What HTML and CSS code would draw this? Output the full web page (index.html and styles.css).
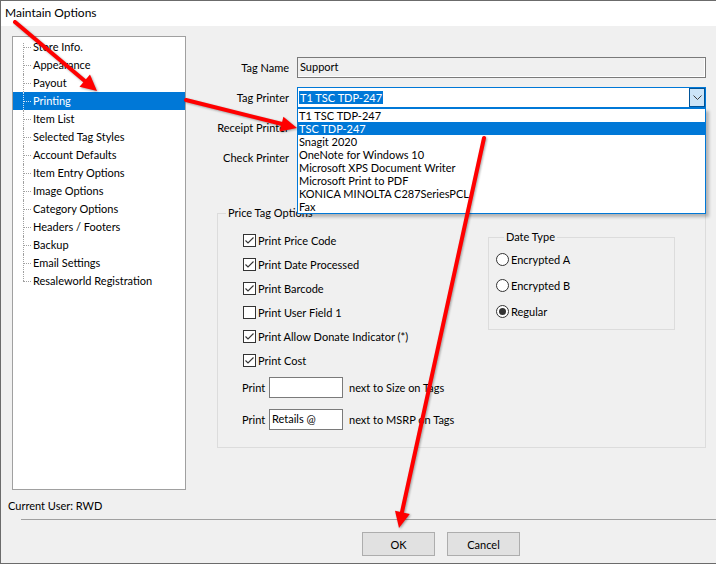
FILE: index.html
```html
<!doctype html>
<html>
  <head>
    <title>Maintain Options</title>
    <link rel="stylesheet" href="styles.css">
  </head>
  <body>
    <div class="window">
      <div class="titlebar">Maintain Options</div>
      <div class="content">
        <div class="main">
          <ul class="tree">
            <li>Store Info.</li>
            <li>Appearance</li>
            <li>Payout</li>
            <li class="selected">Printing</li>
            <li>Item List</li>
            <li>Selected Tag Styles</li>
            <li>Account Defaults</li>
            <li>Item Entry Options</li>
            <li>Image Options</li>
            <li>Category Options</li>
            <li>Headers / Footers</li>
            <li>Backup</li>
            <li>Email Settings</li>
            <li>Resaleworld Registration</li>
          </ul>

          <div class="panel">
            <div class="fields">
              <label class="field-label">Tag Name</label>
              <div class="textbox readonly">Support</div>

              <label class="field-label">Tag Printer</label>
              <div class="combo focused">
                <span class="combo-value"><span class="sel-text">T1 TSC TDP-247</span></span>
                <span class="combo-btn">
                  <svg width="9" height="5" viewBox="0 0 9 5"><path d="M0.5 0.5 L4.5 4.5 L8.5 0.5" fill="none" stroke="#404040" stroke-width="1"/></svg>
                </span>
                <ul class="combo-list">
                  <li>T1 TSC TDP-247</li>
                  <li class="hover">TSC TDP-247</li>
                  <li>Snagit 2020</li>
                  <li>OneNote for Windows 10</li>
                  <li>Microsoft XPS Document Writer</li>
                  <li>Microsoft Print to PDF</li>
                  <li>KONICA MINOLTA C287SeriesPCL</li>
                  <li>Fax</li>
                </ul>
              </div>

              <label class="field-label">Receipt Printer</label>
              <div class="combo"></div>

              <label class="field-label">Check Printer</label>
              <div class="combo"></div>
            </div>

            <fieldset class="group price-tag">
              <legend>Price Tag Options</legend>
              <div class="options">
                <div class="check-row"><span class="checkbox checked"><svg width="11" height="11" viewBox="0 0 11 11"><path d="M1.5 5.5 L4 8 L9.5 2.5" fill="none" stroke="#333" stroke-width="1.1"/></svg></span>Print Price Code</div>
                <div class="check-row"><span class="checkbox checked"><svg width="11" height="11" viewBox="0 0 11 11"><path d="M1.5 5.5 L4 8 L9.5 2.5" fill="none" stroke="#333" stroke-width="1.1"/></svg></span>Print Date Processed</div>
                <div class="check-row"><span class="checkbox checked"><svg width="11" height="11" viewBox="0 0 11 11"><path d="M1.5 5.5 L4 8 L9.5 2.5" fill="none" stroke="#333" stroke-width="1.1"/></svg></span>Print Barcode</div>
                <div class="check-row"><span class="checkbox"></span>Print User Field 1</div>
                <div class="check-row"><span class="checkbox checked"><svg width="11" height="11" viewBox="0 0 11 11"><path d="M1.5 5.5 L4 8 L9.5 2.5" fill="none" stroke="#333" stroke-width="1.1"/></svg></span>Print Allow Donate Indicator (*)</div>
                <div class="check-row"><span class="checkbox checked"><svg width="11" height="11" viewBox="0 0 11 11"><path d="M1.5 5.5 L4 8 L9.5 2.5" fill="none" stroke="#333" stroke-width="1.1"/></svg></span>Print Cost</div>

                <div class="print-row first">
                  <span class="print-label">Print</span>
                  <div class="textbox small"></div>
                  <span>next to Size on Tags</span>
                </div>
                <div class="print-row">
                  <span class="print-label">Print</span>
                  <div class="textbox small">Retails @</div>
                  <span>next to MSRP on Tags</span>
                </div>
              </div>

              <fieldset class="group date-type">
                <legend>Date Type</legend>
                <div class="radio-row"><span class="radio"></span>Encrypted A</div>
                <div class="radio-row"><span class="radio"></span>Encrypted B</div>
                <div class="radio-row"><span class="radio checked"></span>Regular</div>
              </fieldset>
            </fieldset>
          </div>
        </div>

        <div class="status">Current User: RWD</div>
        <div class="separator"></div>
        <div class="buttons">
          <button class="btn">OK</button>
          <button class="btn">Cancel</button>
        </div>
      </div>
    </div>

    <!-- red annotation arrows drawn over the dialog -->
    <svg class="annotations" width="716" height="565" viewBox="0 0 716 565">
      <g fill="#ff0000" stroke="#ff0000" stroke-width="4" stroke-linecap="round">
        <line x1="15" y1="22" x2="86" y2="82"/>
        <polygon stroke="none" points="97,91 79.5,86.8 90,74.5"/>
        <line x1="186" y1="100" x2="282" y2="124"/>
        <polygon stroke="none" points="297,128 279.6,131.4 283.4,116.8"/>
        <line x1="484" y1="138" x2="402" y2="512"/>
        <polygon stroke="none" points="399,528 395,510.8 409.8,514"/>
      </g>
    </svg>
  </body>
</html>
```

FILE: styles.css
```css
body {
  margin: 0;
  background: #fff;
  font-family: Lato, "Liberation Sans", sans-serif;
  font-size: 11px;
  color: #000;
  overflow: hidden;
}

.window {
  height: 564px;
  box-sizing: border-box;
  border: 1px solid #6b6b6b;
  border-right: 0;
  display: flex;
  flex-direction: column;
}
.titlebar {
  height: 25px;
  line-height: 24px;
  padding-left: 4px;
  font-size: 12px;
  background: #fff;
}
.content {
  flex: 1;
  background: #f0f0f0;
  display: flex;
  flex-direction: column;
}
.main {
  display: flex;
  align-items: flex-start;
  padding-top: 10px;
}

/* tree */
.tree {
  list-style: none;
  margin: 0 0 0 11px;
  padding: 1px 0 0;
  width: 174px;
  height: 454px;
  box-sizing: border-box;
  background: #fff;
  border: 1px solid #a0a0a0;
}
.tree li {
  position: relative;
  height: 18px;
  line-height: 18px;
  padding-left: 20px;
  white-space: nowrap;
}
.tree li::before {
  content: "";
  position: absolute;
  left: 10px;
  top: 0;
  bottom: 0;
  border-left: 1px dotted #a0a0a0;
}
.tree li:first-child::before { top: 5px; }
.tree li:last-child::before { bottom: 9px; }
.tree li::after {
  content: "";
  position: absolute;
  left: 10px;
  top: 9px;
  width: 8px;
  border-top: 1px dotted #a0a0a0;
}
.tree li.selected {
  background: #0078d7;
  color: #fff;
}
.tree li.selected::before,
.tree li.selected::after { border-color: #cfe3f5; }

/* right panel */
.panel {
  margin-left: 31px;
  width: 489px;
  padding-top: 21px;
}
.fields {
  display: grid;
  grid-template-columns: 72px 1fr;
  column-gap: 8px;
  row-gap: 9px;
  grid-auto-rows: 21px;
  align-items: center;
}
.field-label {
  text-align: right;
  white-space: nowrap;
}
.textbox {
  height: 21px;
  box-sizing: border-box;
  border: 1px solid #7a7a7a;
  background: #fff;
  padding: 0 2px;
  line-height: 18px;
}
.textbox.readonly {
  background: #f0f0f0;
  box-shadow: inset -1px -1px 0 #fff;
}
.textbox.small { width: 74px; }

.combo {
  position: relative;
  height: 21px;
  box-sizing: border-box;
  border: 1px solid #7a7a7a;
  background: #fff;
}
.combo.focused { border-color: #0078d7; }
.combo-value {
  display: block;
  padding: 2px 1px;
  line-height: 15px;
}
.sel-text {
  background: #0078d7;
  color: #fff;
  padding: 0 1px;
}
.combo-btn {
  position: absolute;
  right: 0;
  top: 0;
  bottom: 0;
  width: 16px;
  box-sizing: border-box;
  background: #cce4f7;
  border: 1px solid #005499;
  display: flex;
  align-items: center;
  justify-content: center;
}
.combo-list {
  position: absolute;
  left: -1px;
  right: -1px;
  top: 20px;
  margin: 0;
  padding: 0;
  list-style: none;
  background: #fff;
  border: 1px solid #0078d7;
  box-shadow: 3px 3px 3px rgba(0, 0, 0, 0.25);
  z-index: 2;
}
.combo-list li {
  height: 13px;
  line-height: 13px;
  padding-left: 1px;
  white-space: nowrap;
}
.combo-list li.hover {
  background: #0078d7;
  color: #fff;
}

/* group boxes */
.group {
  margin: 0;
  border: 1px solid #dcdcdc;
  padding: 0;
  min-width: 0;
}
.group legend {
  margin-left: 8px;
  padding: 0 2px;
  line-height: 14px;
}
.price-tag {
  margin-top: 38px;
  height: 242px;
  box-sizing: border-box;
  display: flex;
  align-items: flex-start;
}
.options {
  padding: 8px 0 0 25px;
}
.check-row {
  display: flex;
  align-items: center;
  height: 24px;
}
.checkbox {
  width: 13px;
  height: 13px;
  box-sizing: border-box;
  border: 1px solid #333;
  background: #fff;
  margin-right: 2px;
  display: flex;
}
.print-row {
  display: flex;
  align-items: center;
  height: 21px;
  margin-top: 11px;
  margin-left: -1px;
}
.print-row.first { margin-top: 5px; }
.print-label { width: 27px; }
.print-row .textbox { margin-right: 6px; }

.date-type {
  margin-left: auto;
  margin-right: 30px;
  margin-top: 10px;
  width: 187px;
  height: 100px;
  box-sizing: border-box;
  padding: 2px 0 0 7px;
}
.radio-row {
  display: flex;
  align-items: center;
  height: 26px;
}
.radio {
  width: 13px;
  height: 13px;
  box-sizing: border-box;
  border: 1px solid #333;
  border-radius: 50%;
  background: #fff;
  margin-right: 2px;
  display: flex;
  align-items: center;
  justify-content: center;
}
.radio.checked::after {
  content: "";
  width: 7px;
  height: 7px;
  border-radius: 50%;
  background: #333;
}

/* bottom */
.status {
  padding-left: 7px;
  margin-top: 8px;
  line-height: 15px;
}
.separator {
  margin: 6px 0 0 20px;
  border-top: 1px solid #a0a0a0;
}
.buttons {
  display: flex;
  gap: 12px;
  padding-left: 361px;
  margin-top: 12px;
}
.btn {
  width: 73px;
  height: 24px;
  background: #e1e1e1;
  border: 1px solid #adadad;
  font: inherit;
  color: #000;
  padding: 0;
}

.annotations {
  position: absolute;
  left: 0;
  top: 0;
  z-index: 10;
  pointer-events: none;
  filter: drop-shadow(1px 1px 1px rgba(0, 0, 0, 0.35));
}
```
